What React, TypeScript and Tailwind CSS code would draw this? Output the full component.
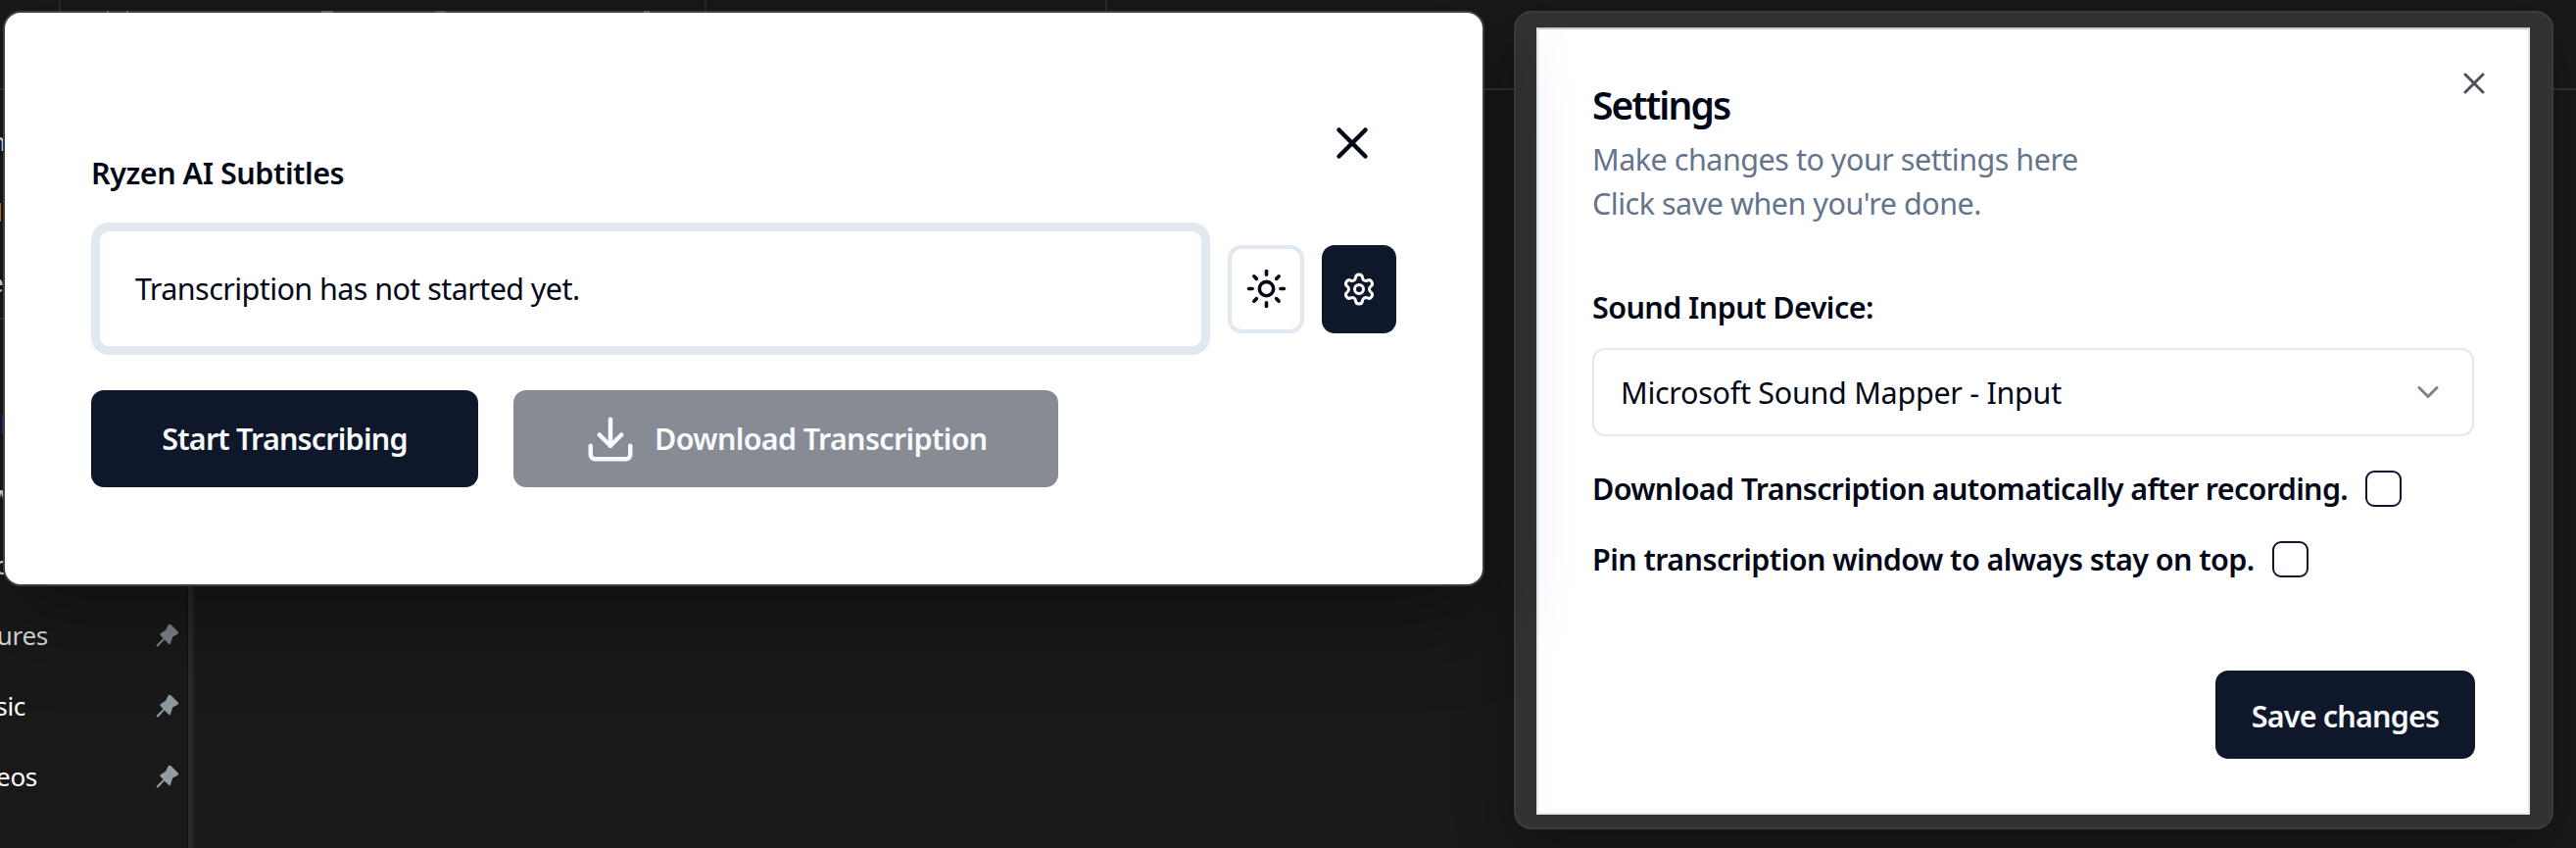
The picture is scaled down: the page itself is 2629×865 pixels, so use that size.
import { ChevronDown, Download, Settings, Sun, X } from "lucide-react";

const hiddenItems = [
  { text: "n", style: "-ml-[10px] text-[#e8eef5]" },
  { text: "l", style: "-ml-[4px] text-[#f0c090]" },
  { text: "e", style: "-ml-[11px] text-[#e8eef5]" },
  { text: "", style: "" },
  { text: "l", style: "text-[#2a3a9a]" },
  { text: "w", style: "-ml-[9px] text-[#e8eef5]" },
  { text: "c", style: "-ml-[5px] text-[#e8e8e8]" },
];

const pinnedItems = [
  { text: "Pictures", width: "w-[49px]", color: "text-[#dcdcdc]", pin: "text-[#80878b]" },
  { text: "Music", width: "w-[26px]", color: "text-white", pin: "text-[#8e979c]" },
  { text: "Videos", width: "w-[38px]", color: "text-white", pin: "text-[#929ca1]" },
];

const options = [
  { label: "Download Transcription automatically after recording.", tracking: "tracking-[-0.66px]" },
  { label: "Pin transcription window to always stay on top.", tracking: "tracking-[-0.58px]" },
];

function Pin({ className }: { className: string }) {
  return (
    <svg viewBox="0 0 24 24" className={`h-6 w-6 shrink-0 ${className}`} fill="currentColor">
      <path d="M12.6 1.6c.7-1.1 2-1.2 2.9-.4l7 7c.9.9.7 2.2-.4 2.8l-4.9 2.600-2.2 7c-.2.7-1.1.9-1.6.4l-4.600-4.600-6 6.600c-.5.5-1.300.6-1.800.2-.4-.5-.3-1.200.1-1.700l6.400-6.300-2.900-3.400c-.5-.6-.3-1.400.4-1.700l5.100-3.400z" />
    </svg>
  );
}

function Backdrop() {
  return (
    <div className="flex h-full w-full flex-col">
      <div className="flex h-[92px] shrink-0 border-b-2 border-[#333333]">
        <div className="w-[62px] border-r-2 border-[#292929]" />
        <div className="w-[659px] border-r-2 border-[#292929]" />
        <div className="w-[409px] border-r-2 border-[#292929]" />
      </div>
      <div className="flex min-h-0 flex-1">
        <div className="flex w-[192px] flex-col overflow-hidden border-r-2 border-[#141414] pt-[16px] text-[26px] leading-[72px]">
          {hiddenItems.map((item, i) => (
            <div key={i} className={`h-[72px] shrink-0 ${i === 3 ? "border-t-2 border-[#333333]" : ""} ${item.style}`}>
              {item.text}
            </div>
          ))}
          {pinnedItems.map((item) => (
            <div key={item.text} className="flex h-[72px] shrink-0 items-center justify-between pr-[7px]">
              <div className={`flex justify-end tracking-[-0.3px] ${item.width} ${item.color}`}>
                <span>{item.text}</span>
              </div>
              <Pin className={item.pin} />
            </div>
          ))}
        </div>
        <div className="w-[7px] border-l-4 border-[#2b2b2b] bg-[#222222]" />
      </div>
    </div>
  );
}

function SettingsWindow() {
  return (
    <div className="absolute top-[11px] left-[1545px] h-[835px] w-[1061px] rounded-[18px] border-2 border-[#3c3c3c] bg-[#323232] pt-[15px] pl-[21px] shadow-[0_20px_60px_rgba(0,0,0,0.3)]">
      <div className="flex h-[803px] w-[1014px] flex-col border-2 border-[#e2e8f0] border-t-[#c6cad2] bg-white pr-[55px] pl-[55px] text-[30.5px] text-[#020817]">
        <div className="flex justify-between pt-[37px]">
          <div className="pt-[20px]">
            <h2 className="text-[39px] leading-[40px] font-semibold tracking-[-1.9px]">Settings</h2>
            <p className="mt-[13px] leading-[45px] tracking-[-0.48px] whitespace-nowrap text-[#64748b]">
              Make changes to your settings here
              <br />
              Click save when you're done.
            </p>
          </div>
          <X className="-mr-[18px] h-9 w-9 opacity-70" />
        </div>
        <label className="mt-[61px] leading-[45px] font-semibold tracking-[-0.57px]">Sound Input Device:</label>
        <button className="mt-[19px] flex h-[90px] w-[900px] shrink-0 items-center justify-between rounded-[13px] border-2 border-[#e2e8f0] pr-[27px] pl-[27px]">
          <span className="pt-[1px] tracking-[-0.28px]">Microsoft Sound Mapper - Input</span>
          <ChevronDown className="h-9 w-9 opacity-50" />
        </button>
        <div className="mt-[35px] flex flex-col gap-[35px]">
          {options.map((option) => (
            <div key={option.label} className="flex h-[37px] items-center gap-[18px]">
              <div className={`pt-[1px] font-semibold whitespace-nowrap ${option.tracking}`}>{option.label}</div>
              <button className="h-[37px] w-[37px] rounded-[9px] border-2 border-[#0f172a]" />
            </div>
          ))}
        </div>
        <button className="mt-[95px] -mr-[1px] h-[90px] w-[265px] shrink-0 self-end rounded-[13px] bg-[#0f172a] pt-[3px] font-semibold tracking-[-0.8px] text-[#f8fafc]">
          Save changes
        </button>
      </div>
    </div>
  );
}

function SubtitlesWindow() {
  return (
    <div className="absolute top-[11px] left-[3px] h-[587px] w-[1512px] rounded-[18px] border-2 border-[#3e3e3e] bg-white pr-[88px] pl-[88px] text-[30.5px] text-[#020817] shadow-[0_36px_84px_rgba(0,0,0,0.35)]">
      <div className="absolute -top-[2px] left-[104px] h-[2px] w-[2px] bg-[#6a6a6a]" />
      <div className="absolute -top-[2px] left-[124px] h-[2px] w-[2px] bg-[#6a6a6a]" />
      <div className="absolute -top-[2px] left-[323px] h-[2px] w-[12px] bg-[#686868]" />
      <div className="absolute -top-[2px] left-[439px] h-[2px] w-[11px] bg-[#4a6070]" />
      <div className="absolute -top-[2px] left-[652px] h-[2px] w-[6px] bg-[#686868]" />
      <div className="flex h-[214px] justify-between pt-[106px]">
        <h1 className="mt-[35px] leading-[45px] font-semibold tracking-[-0.45px]">Ryzen AI Subtitles</h1>
        <X className="mr-[18px] h-[54px] w-[54px]" />
      </div>
      <div className="flex items-center gap-[18px]">
        <div className="flex h-[135px] w-[1142px] items-center rounded-[18px] border-[9px] border-[#e2e8f0] pt-[1px] pl-[36px] tracking-[-0.57px]">
          Transcription has not started yet.
        </div>
        <button className="flex h-[90px] w-[78px] items-center justify-center rounded-[14px] border-4 border-[#e2e8f0]">
          <Sun className="h-[43px] w-[43px] shrink-0" />
        </button>
        <button className="flex h-[90px] w-[76px] items-center justify-center rounded-[13px] bg-[#0f172a] text-white">
          <Settings className="h-9 w-9" />
        </button>
      </div>
      <div className="mt-[36px] flex gap-[36px] font-semibold text-[#f8fafc]">
        <button className="h-[99px] w-[395px] rounded-[13px] bg-[#0f172a] pt-[1px] tracking-[-0.8px] whitespace-nowrap">
          Start Transcribing
        </button>
        <button className="flex h-[99px] w-[556px] items-center rounded-[13px] bg-[#878b94] pl-[72px] tracking-[-0.65px] whitespace-nowrap">
          <Download className="mr-[18px] h-[54px] w-[54px]" />
          <span className="pt-[1px]">Download Transcription</span>
        </button>
      </div>
    </div>
  );
}

export default function App() {
  return (
    <div className="relative h-[865px] w-full overflow-hidden bg-[#191919] font-['Noto_Sans','Open_Sans',sans-serif]">
      <Backdrop />
      <SettingsWindow />
      <SubtitlesWindow />
    </div>
  );
}
